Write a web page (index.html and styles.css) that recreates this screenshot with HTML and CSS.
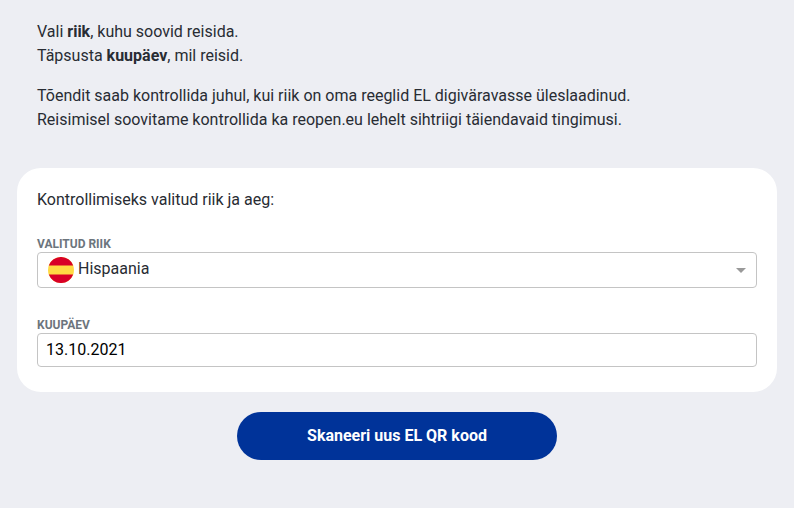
FILE: index.html
```html
<!DOCTYPE html>
<html lang="et">
<head>
    <meta charset="UTF-8">
    <title>Kontroll</title>
    <link rel="stylesheet" href="styles.css">
</head>
<body>

<main class="page">
    <div class="intro">
        <p>Vali <b>riik</b>, kuhu soovid reisida.<br>Täpsusta <b>kuupäev</b>, mil reisid.</p>
        <p>Tõendit saab kontrollida juhul, kui riik on oma reeglid EL digiväravasse üleslaadinud.<br>Reisimisel soovitame kontrollida ka reopen.eu lehelt sihtriigi täiendavaid tingimusi.</p>
    </div>

    <div class="card">
        <p class="card-title">Kontrollimiseks valitud riik ja aeg:</p>
        <div class="field">
            <div class="label">VALITUD RIIK</div>
            <div class="select">
                <svg class="flag" width="26" height="26" viewBox="0 0 26 26">
                    <circle cx="13" cy="13" r="13" fill="#ffda44"/>
                    <path d="M.8 8.5a13 13 0 0 1 24.4 0zM.8 17.5a13 13 0 0 0 24.4 0z" fill="#d80027"/>
                </svg>
                <span class="country">Hispaania</span>
                <span class="arrow"></span>
            </div>
        </div>
        <div class="field">
            <label class="label" for="date">KUUPÄEV</label>
            <input class="date" id="date" type="text" value="13.10.2021">
        </div>
    </div>

    <button class="scan">Skaneeri uus EL QR kood</button>
</main>

</body>
</html>
```

FILE: styles.css
```css
* {
    box-sizing: border-box;
}
body {
    margin: 0;
    background-color: #edeef3;
    color: #282c33;
    font-family: Roboto, Arial, sans-serif;
    font-size: 16px;
    line-height: 24px;
}
p {
    margin: 0;
}
.page {
    display: flex;
    flex-direction: column;
    padding: 20px 17px 48px;
}
.intro {
    display: flex;
    flex-direction: column;
    gap: 16px;
    padding: 0 20px;
    margin-bottom: 36px;
}
.card {
    height: 224px;
    padding: 20px;
    border-radius: 24px;
    background-color: #fff;
}
.card-title {
    margin-bottom: 23px;
}
.field {
    margin-bottom: 28px;
}
.label {
    display: block;
    height: 17px;
    color: #6c757d;
    font-size: 12px;
    font-weight: bold;
    line-height: 18px;
}
.select {
    display: flex;
    align-items: center;
    height: 36px;
    padding: 0 10px;
    border: 1px solid #c4c4c4;
    border-radius: 4px;
}
.flag {
    margin-right: 4px;
}
.country {
    flex: 1;
    margin-top: -3px;
}
.arrow {
    border: 5px solid transparent;
    border-top-color: #999;
    border-bottom: 0;
}
.date {
    display: block;
    width: 100%;
    height: 34px;
    padding: 0 8px 2px;
    border: 1px solid #c4c4c4;
    border-radius: 4px;
    color: #000;
    font: inherit;
}
.scan {
    align-self: center;
    width: 320px;
    height: 48px;
    margin-top: 20px;
    padding: 0 0 2px;
    border: none;
    border-radius: 24px;
    background-color: #003399;
    color: #fff;
    font: bold 16px Roboto, Arial, sans-serif;
    cursor: pointer;
}
```
